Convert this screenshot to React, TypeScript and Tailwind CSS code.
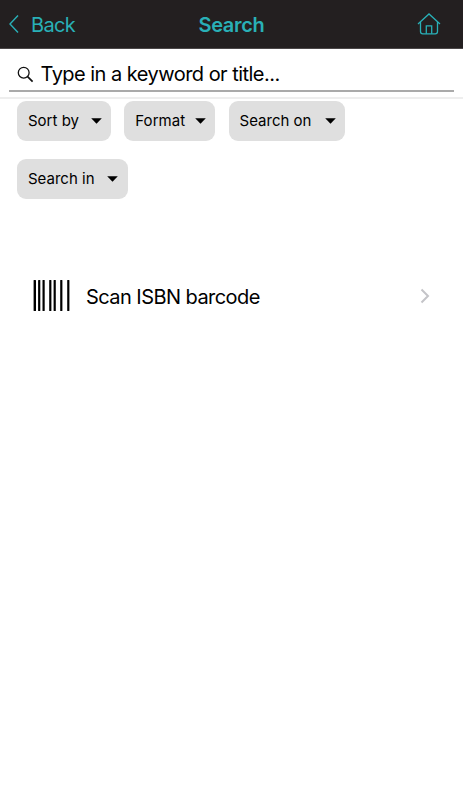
type Chip = {
  label: string
  width: string
  tracking: string
}

const chips: Chip[] = [
  { label: 'Sort by', width: 'w-[94px]', tracking: 'tracking-[0px]' },
  { label: 'Format', width: 'w-[91px]', tracking: 'tracking-[0.05px]' },
  { label: 'Search on', width: 'w-[116.5px]', tracking: 'tracking-[0px]' },
  { label: 'Search in', width: 'w-[110.5px]', tracking: 'tracking-[0px]' },
]

const bars = [
  { x: 0.6, w: 2.4 },
  { x: 5.1, w: 2.2 },
  { x: 9.5, w: 2.2 },
  { x: 16.2, w: 2.2 },
  { x: 20.6, w: 2.2 },
  { x: 27.2, w: 2.2 },
  { x: 34.2, w: 2.2 },
]

function FilterChip({ chip }: { chip: Chip }) {
  return (
    <button
      type="button"
      className={`flex h-10 items-center justify-between rounded-[9px] bg-[#dfdfdf] pr-[9.5px] pl-[11px] text-[15px] text-black ${chip.width}`}
    >
      <span className={`pt-0.5 whitespace-nowrap ${chip.tracking}`}>{chip.label}</span>
      <svg width="11" height="6" viewBox="0 0 11 6" fill="#000">
        <path d="M0.2 0.3H10.8L5.5 5.8Z" />
      </svg>
    </button>
  )
}

function Header() {
  return (
    <header className="grid h-[49px] grid-cols-3 items-center border-b border-[#4b4748] bg-[#231f20] text-[#29b0b7]">
      <button type="button" className="flex items-center pl-[9px]">
        <svg width="10" height="18" viewBox="0 0 10 18" fill="none" stroke="currentColor" strokeWidth="1.4">
          <path d="M9 0.5L1 9L9 17.5" />
        </svg>
        <span className="ml-3 pt-px text-[20px] tracking-[-0.65px]">Back</span>
      </button>
      <h1 className="pt-0.5 text-center text-[20px] font-semibold tracking-[-0.3px]">Search</h1>
      <button type="button" aria-label="Home" className="mr-[22px] justify-self-end">
        <svg width="24" height="22" viewBox="0 0 24 22" fill="none" stroke="currentColor" strokeWidth="1.3">
          <path d="M1 11L12 1L23 11" />
          <path d="M3.5 9V18.5Q3.5 20.8 5.8 20.8H18.2Q20.5 20.8 20.5 18.5V9" />
          <path d="M9.3 20.8V12.8H14.7V20.8" />
        </svg>
      </button>
    </header>
  )
}

export default function App() {
  return (
    <div className="min-h-[800px] bg-white font-['Inter',sans-serif] text-black">
      <Header />
      <div className="h-[50px] border-b-2 border-[#eeeeee] px-[9px]">
        <div className="flex h-[43px] items-center border-b-2 border-[#aaaaaa] pt-2 pl-2">
          <svg className="mt-px" width="17" height="17" viewBox="0 0 17 17" fill="none" stroke="#111" strokeWidth="1.3">
            <circle cx="6.7" cy="6.7" r="5.4" />
            <path d="M10.6 10.6L15.6 15.6" strokeWidth="1.7" />
          </svg>
          <span className="ml-[6.5px] text-[20px] tracking-[-0.53px]">Type in a keyword or title...</span>
        </div>
      </div>
      <div className="mt-[1.5px] flex flex-wrap gap-x-[13.3px] gap-y-[18px] px-[17px]">
        {chips.map((chip) => (
          <FilterChip key={chip.label} chip={chip} />
        ))}
      </div>
      <button type="button" className="mt-[81px] flex h-8 w-full items-center pr-[33px] pl-[33px]">
        <svg width="38" height="31" viewBox="0 0 38 31" fill="#000">
          {bars.map((bar) => (
            <rect key={bar.x} x={bar.x} y="0" width={bar.w} height="31" rx="0.5" />
          ))}
        </svg>
        <span className="ml-[15px] pt-0.5 text-[20px] tracking-[-0.56px]">Scan ISBN barcode</span>
        <svg className="ml-auto" width="10" height="16" viewBox="0 0 10 16" fill="none" stroke="#c4c4c8" strokeWidth="2">
          <path d="M1.5 1.5L8 8L1.5 14.5" />
        </svg>
      </button>
    </div>
  )
}
